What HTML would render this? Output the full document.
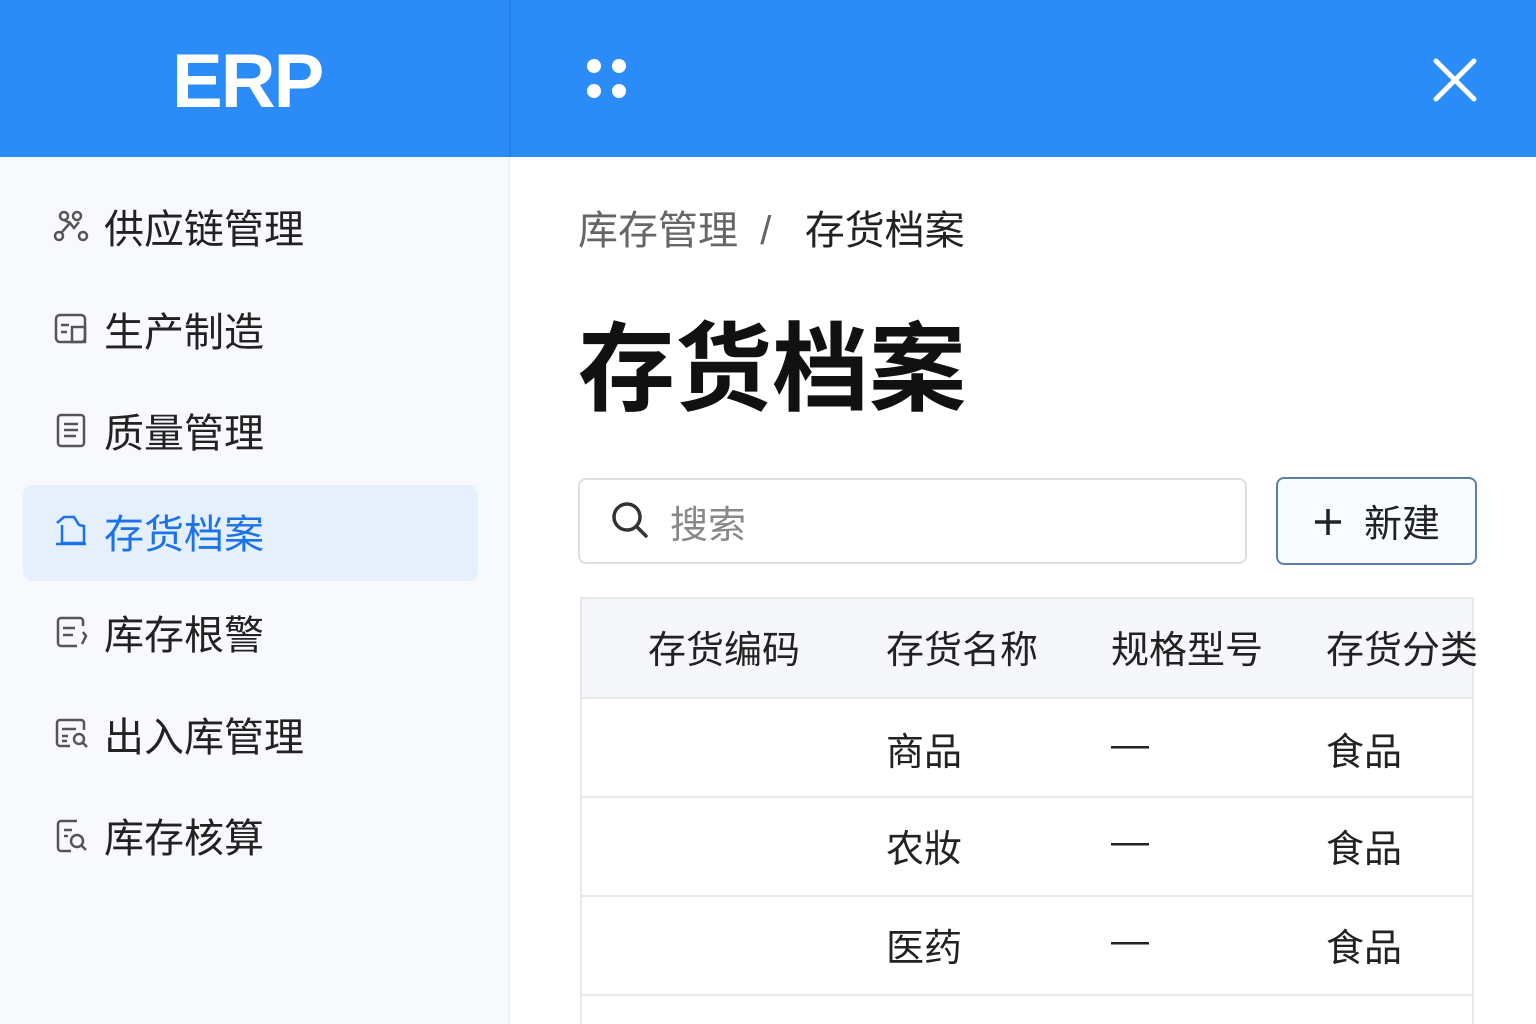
<!DOCTYPE html>
<html><head><meta charset="utf-8"><style>
*{margin:0;padding:0;box-sizing:border-box}
body{width:1536px;height:1024px;overflow:hidden;background:#fff;font-family:"Liberation Sans","Noto Sans CJK SC",sans-serif;position:relative}
.hdr{position:absolute;left:0;top:0;width:1536px;height:157px;background:#2b8cf8}
.hdr .div{position:absolute;left:509px;top:0;width:2px;height:157px;background:#2580e6}
.logo{position:absolute;left:172px;top:38px;color:#fff;font-size:76px;font-weight:bold;letter-spacing:-2px}
.side{position:absolute;left:0;top:157px;width:510px;height:867px;background:#f7f9fc;border-right:2px solid #eceff3}
.item{position:absolute;left:53px;height:40px;display:flex;align-items:center;font-size:40px;color:#222}
.item svg{width:36px;height:36px;margin-right:15px}
.active{position:absolute;left:23px;top:485px;width:455px;height:96px;background:#e6f0fd;border-radius:10px}
.bc{position:absolute;left:578px;top:198px;font-size:40px;color:#666}
.bc span{color:#222}
.title{position:absolute;left:578px;top:290px;font-size:97px;font-weight:bold;color:#111}
.search{position:absolute;left:578px;top:478px;width:669px;height:86px;border:2px solid #dcdfe4;border-radius:8px}
.search .t{position:absolute;left:90px;top:14px;font-size:38px;color:#888}
.btn{position:absolute;left:1276px;top:477px;width:201px;height:88px;border:2px solid #5c7fa6;border-radius:8px;background:#f8fbff;font-size:38px;color:#222}
.tbl{position:absolute;left:580px;top:597px;width:894px;height:427px;border-left:2px solid #e6e8eb;border-right:2px solid #e6e8eb;border-top:2px solid #e6e8eb}
.th{position:absolute;left:0;top:0;width:100%;height:100px;background:#f5f7fa;border-bottom:2px solid #e6e8eb}
.row{position:absolute;left:0;width:100%;height:99px;border-bottom:2px solid #e6e8eb}
.c{position:absolute;font-size:38px;color:#222;white-space:nowrap}
</style></head><body>
<div class="hdr"><div class="div"></div><div class="logo">ERP</div>
<svg style="position:absolute;left:586px;top:58px" width="42" height="42"><circle cx="8" cy="8" r="7" fill="#fff"/><circle cx="33" cy="8" r="7" fill="#fff"/><circle cx="8" cy="33" r="7" fill="#fff"/><circle cx="33" cy="33" r="7" fill="#fff"/></svg>
<svg style="position:absolute;left:1433px;top:58px" width="44" height="44"><path d="M3 3L41 41M41 3L3 41" stroke="#fff" stroke-width="5" stroke-linecap="round"/></svg>
</div>
<div class="side"></div>
<div class="active"></div>
<div class="item" style="top:206px"><svg viewBox="0 0 36 36" fill="none" stroke="#555" stroke-width="2.5"><circle cx="11" cy="8" r="4"/><circle cx="24" cy="8" r="4"/><circle cx="6" cy="28" r="4"/><circle cx="30" cy="28" r="4"/><path d="M9 24l8-9 4 5 5-6M11 12l6 3"/></svg>供应链管理</div>
<div class="item" style="top:309px"><svg viewBox="0 0 36 36" fill="none" stroke="#555" stroke-width="2.5"><rect x="3" y="4" width="29" height="27" rx="4"/><path d="M8 14h8M8 21h6M19 16h13v15H19z"/></svg>生产制造</div>
<div class="item" style="top:410px"><svg viewBox="0 0 36 36" fill="none" stroke="#555" stroke-width="2.5"><rect x="5" y="3" width="26" height="31" rx="3"/><path d="M11 12h14M11 18h14M11 24h12"/></svg>质量管理</div>
<div class="item" style="top:511px;color:#1a73e8"><svg viewBox="0 0 36 36" fill="none" stroke="#1a73e8" stroke-width="2.5"><path d="M4 10l7-6h10l5 8 5 1v17H9V12M3 31h30"/></svg>存货档案</div>
<div class="item" style="top:612px"><svg viewBox="0 0 36 36" fill="none" stroke="#555" stroke-width="2.5"><path d="M30 12V7a3 3 0 0 0-3-3H8a3 3 0 0 0-3 3v22a3 3 0 0 0 3 3h16M10 14h12M10 21h10M30 18l3 4-4 8"/></svg>库存根警</div>
<div class="item" style="top:714px"><svg viewBox="0 0 36 36" fill="none" stroke="#555" stroke-width="2.5"><path d="M31 14V7a3 3 0 0 0-3-3H7a3 3 0 0 0-3 3v20a3 3 0 0 0 3 3h10M9 13h14M9 20h6M9 25h5"/><circle cx="26" cy="23" r="5"/><path d="M30 27l4 4"/></svg>出入库管理</div>
<div class="item" style="top:815px"><svg viewBox="0 0 36 36" fill="none" stroke="#555" stroke-width="2.5"><path d="M24 4H8a3 3 0 0 0-3 3v24a3 3 0 0 0 3 3h10M11 13h8M11 19h4"/><circle cx="24" cy="24" r="6"/><path d="M28 28l5 5"/></svg>库存核算</div>
<div class="bc">库存管理 &nbsp;/&nbsp;&nbsp; <span>存货档案</span></div>
<div class="title">存货档案</div>
<div class="search"><svg style="position:absolute;left:30px;top:20px" width="40" height="40" fill="none" stroke="#333" stroke-width="3.5"><circle cx="17" cy="17" r="13"/><path d="M27 27l9 9" stroke-linecap="round"/></svg><div class="t">搜索</div></div>
<div class="btn"><svg style="position:absolute;left:36px;top:29px" width="28" height="28"><path d="M14 1v26M1 14h26" stroke="#222" stroke-width="3.5"/></svg><span style="position:absolute;left:86px;top:14px">新建</span></div>
<div class="tbl">
<div class="th"><div class="c" style="left:66px;top:20px">存货编码</div><div class="c" style="left:304px;top:20px">存货名称</div><div class="c" style="left:529px;top:20px">规格型号</div><div class="c" style="left:744px;top:20px">存货分类</div></div>
<div class="row" style="top:100px"><div class="c" style="left:304px;top:22px">商品</div><div class="c" style="left:529px;top:25px">—</div><div class="c" style="left:744px;top:22px">食品</div></div>
<div class="row" style="top:199px"><div class="c" style="left:304px;top:20px">农妝</div><div class="c" style="left:529px;top:23px">—</div><div class="c" style="left:744px;top:20px">食品</div></div>
<div class="row" style="top:298px"><div class="c" style="left:304px;top:20px">医药</div><div class="c" style="left:529px;top:23px">—</div><div class="c" style="left:744px;top:20px">食品</div></div>
</div>
</body></html>
